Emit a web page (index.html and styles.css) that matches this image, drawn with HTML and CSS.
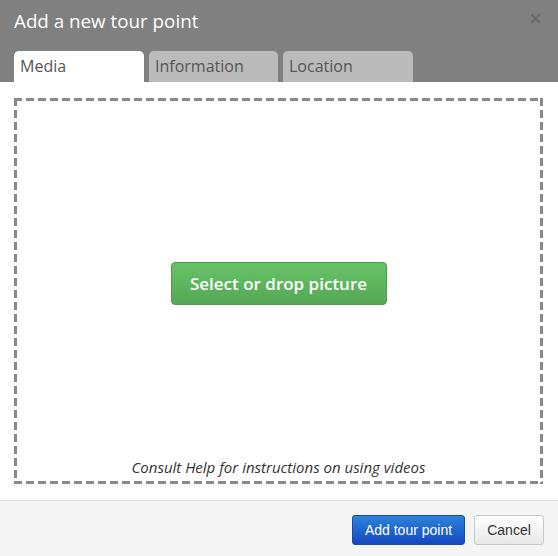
FILE: index.html
```html
<!DOCTYPE html>
<html>
<head>
<meta charset="utf-8">
<link rel="stylesheet" href="styles.css">
</head>
<body>
<div class="dialog">
  <div class="header">
    <div class="title-row">
      <div class="title">Add a new tour point</div>
      <svg class="close" width="9" height="9" viewBox="0 0 9 9"><path d="M1 1L8 8M8 1L1 8" stroke="#6a6a6a" stroke-width="2.2" stroke-linecap="square"/></svg>
    </div>
    <div class="tabs">
      <div class="tab active">Media</div>
      <div class="tab w129">Information</div>
      <div class="tab">Location</div>
    </div>
  </div>
  <div class="body">
    <div class="drop">
      <div class="drop-center">
        <div class="pick">Select or drop picture</div>
      </div>
      <div class="caption">Consult Help for instructions on using videos</div>
    </div>
  </div>
  <div class="footer">
    <div class="btn primary">Add tour point</div>
    <div class="btn cancel">Cancel</div>
  </div>
</div>
</body>
</html>
```

FILE: styles.css
```css
html, body { margin: 0; padding: 0; background: #fff; }
.dialog {
  width: 558px;
  height: 556px;
  display: flex;
  flex-direction: column;
  font-family: "Open Sans", sans-serif;
}
.header {
  background: #808080;
  padding: 0 14px;
  height: 82px;
  box-sizing: border-box;
  display: flex;
  flex-direction: column;
}
.title-row {
  display: flex;
  justify-content: space-between;
  align-items: flex-start;
  padding-top: 9px;
  height: 51px;
  box-sizing: border-box;
}
.title {
  color: #fff;
  font-size: 18.8px;
  line-height: 24px;
}
.close { margin-top: 5px; margin-right: 4px; }
.tabs {
  display: flex;
  gap: 5px;
}
.tab {
  width: 130px;
  height: 31px;
  box-sizing: border-box;
  background: #bbbbbb;
  border-radius: 5px 5px 0 0;
  padding-left: 6px;
  font-size: 16px;
  line-height: 31px;
  color: #555;
}
.tab.w129 { width: 129px; }
.tab.active { background: #fff; }
.body {
  flex: 1;
  padding: 16px 15px 16px 14px;
  display: flex;
}
.drop {
  flex: 1;
  padding: 3px;
  display: flex;
  flex-direction: column;
  background-image:
    repeating-linear-gradient(90deg, #888 0 8px, transparent 8px 12px),
    repeating-linear-gradient(90deg, #888 0 8px, transparent 8px 12px),
    repeating-linear-gradient(180deg, #888 0 8px, transparent 8px 12px),
    repeating-linear-gradient(180deg, #888 0 8px, transparent 8px 12px);
  background-size: 100% 3px, 100% 3px, 3px 100%, 3px 100%;
  background-position: 0 0, 0 100%, 0 0, 100% 0;
  background-repeat: no-repeat;
}
.drop-center {
  flex: 1;
  display: flex;
  align-items: center;
  justify-content: center;
  padding-top: 8px;
}
.pick {
  width: 216px;
  height: 43px;
  box-sizing: border-box;
  border: 1px solid #4f9a4f;
  border-radius: 4px;
  background: linear-gradient(#67c367, #55a755);
  color: #fff;
  font-size: 17px;
  font-weight: 600;
  line-height: 41px;
  text-align: center;
}
.caption {
  text-align: center;
  font-style: italic;
  font-size: 15px;
  line-height: 20px;
  color: #333;
  padding-bottom: 4px;
}
.footer {
  height: 56px;
  box-sizing: border-box;
  border-top: 1px solid #ddd;
  background: #f5f5f5;
  display: flex;
  justify-content: flex-end;
  align-items: flex-start;
  gap: 9px;
  padding: 14px 14px 0 0;
}
.btn {
  height: 30px;
  box-sizing: border-box;
  border-radius: 3px;
  font-family: "Liberation Sans", Arial, sans-serif;
  font-size: 14px;
  line-height: 28px;
  text-align: center;
}
.primary {
  width: 113px;
  background: linear-gradient(#2b83d9, #1549c1);
  border: 1px solid #1a4ab0;
  color: #fff;
}
.cancel {
  width: 70px;
  background: linear-gradient(#ffffff, #e8e8e8);
  border: 1px solid #c8c8c8;
  color: #333;
}
```
